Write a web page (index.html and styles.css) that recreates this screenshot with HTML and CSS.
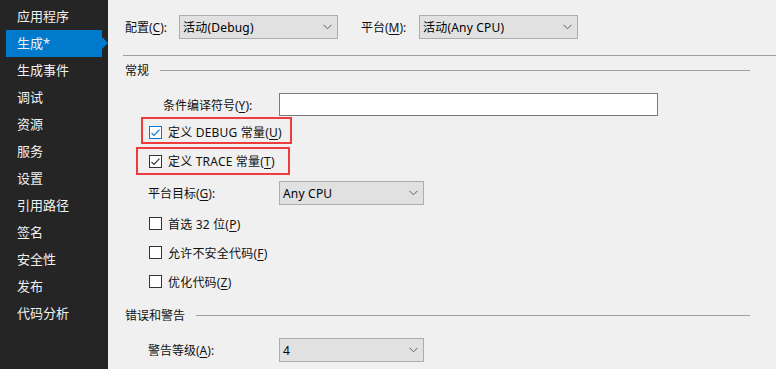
FILE: index.html
```html
<!DOCTYPE html>
<html lang="zh-CN">
<head>
<meta charset="utf-8">
<link rel="stylesheet" href="styles.css">
</head>
<body>
<div class="app">
  <nav class="side">
    <div class="item">应用程序</div>
    <div class="item active">生成*</div>
    <div class="item">生成事件</div>
    <div class="item">调试</div>
    <div class="item">资源</div>
    <div class="item">服务</div>
    <div class="item">设置</div>
    <div class="item">引用路径</div>
    <div class="item">签名</div>
    <div class="item">安全性</div>
    <div class="item">发布</div>
    <div class="item">代码分析</div>
  </nav>
  <main class="main">
    <div class="toprow">
      <span class="lbl-cfg">配置(<u>C</u>):</span>
      <div class="select sel-cfg"><span>活动(Debug)</span><svg class="chev" width="9" height="6" viewBox="0 0 9 6"><path d="M0.5 0.8 L4.5 4.8 L8.5 0.8" fill="none" stroke="#606060" stroke-width="1"/></svg></div>
      <span class="lbl-plat">平台(<u>M</u>):</span>
      <div class="select sel-plat"><span>活动(Any CPU)</span><svg class="chev" width="9" height="6" viewBox="0 0 9 6"><path d="M0.5 0.8 L4.5 4.8 L8.5 0.8" fill="none" stroke="#606060" stroke-width="1"/></svg></div>
    </div>
    <div class="rule"></div>
    <div class="section h1"><span>常规</span><div class="sline"></div></div>
    <div class="field f-sym">
      <span class="flabel flabel-deep">条件编译符号(<u>Y</u>):</span>
      <div class="input"></div>
    </div>
    <div class="cbrow r1">
      <div class="mark mark1">
        <span class="cb blue"><svg width="11" height="11" viewBox="0 0 11 11"><path d="M1.5 5.8 L4 8.3 L9.5 2.6" fill="none" stroke="#0078d7" stroke-width="1.2"/></svg></span>
        <span class="cbtext">定义 DEBUG 常量(<u>U</u>)</span>
      </div>
    </div>
    <div class="cbrow r2">
      <div class="mark mark2">
        <span class="cb"><svg width="11" height="11" viewBox="0 0 11 11"><path d="M1.5 5.8 L4 8.3 L9.5 2.6" fill="none" stroke="#333" stroke-width="1.2"/></svg></span>
        <span class="cbtext">定义 TRACE 常量(<u>T</u>)</span>
      </div>
    </div>
    <div class="field f-target">
      <span class="flabel">平台目标(<u>G</u>):</span>
      <div class="select sel-small"><span>Any CPU</span><svg class="chev" width="9" height="6" viewBox="0 0 9 6"><path d="M0.5 0.8 L4.5 4.8 L8.5 0.8" fill="none" stroke="#606060" stroke-width="1"/></svg></div>
    </div>
    <div class="cbrow plain c1"><span class="cb"></span><span class="cbtext">首选 32 位(<u>P</u>)</span></div>
    <div class="cbrow plain c2"><span class="cb"></span><span class="cbtext">允许不安全代码(<u>F</u>)</span></div>
    <div class="cbrow plain c3"><span class="cb"></span><span class="cbtext">优化代码(<u>Z</u>)</span></div>
    <div class="section h2"><span>错误和警告</span><div class="sline"></div></div>
    <div class="field f-warn">
      <span class="flabel">警告等级(<u>A</u>):</span>
      <div class="select sel-small"><span>4</span><svg class="chev" width="9" height="6" viewBox="0 0 9 6"><path d="M0.5 0.8 L4.5 4.8 L8.5 0.8" fill="none" stroke="#606060" stroke-width="1"/></svg></div>
    </div>
  </main>
</div>
</body>
</html>
```
FILE: styles.css
```css
* { box-sizing: border-box; }
html, body { margin: 0; padding: 0; }
body {
  width: 776px;
  height: 369px;
  overflow: hidden;
  background: #f0f0f0;
  font-family: "Noto Sans", "Noto Sans CJK SC", sans-serif;
  font-size: 12px;
  color: #111;
}
u { text-decoration: underline; text-underline-offset: 2px; }
.app { display: flex; height: 369px; }
.side {
  width: 108px;
  flex: none;
  background: #252526;
  padding-top: 3px;
}
.item {
  position: relative;
  height: 27px;
  line-height: 27px;
  padding-left: 17px;
  color: #f1f1f1;
  font-size: 13px;
  margin-right: 6px;
}
.item.active {
  background: #007acc;
  margin-left: 6px;
  padding-left: 11px;
}
.item.active::after {
  content: "";
  position: absolute;
  right: -6px;
  top: 7px;
  border-left: 6px solid #007acc;
  border-top: 6px solid transparent;
  border-bottom: 6px solid transparent;
}
.main { flex: 1; padding: 15px 0 0 15px; }
.toprow { display: flex; align-items: center; height: 24px; }
.lbl-cfg { margin-left: 2px; width: 54px; }
.lbl-plat { margin-left: 23px; width: 58px; }
.select {
  display: flex;
  align-items: center;
  justify-content: space-between;
  height: 24px;
  background: #e1e1e1;
  border: 1px solid #adadad;
  padding: 0 5px 0 3px;
  color: #000;
}
.select span { letter-spacing: 0.2px; }
.sel-cfg { width: 159px; }
.sel-plat { width: 159px; }
.sel-small { width: 145px; }
.chev { flex: none; }
.rule { height: 1px; background: #a0a0a0; margin-top: 16px; }
.section { display: flex; align-items: center; height: 16px; padding-left: 2px; }
.section .sline { flex: 1; height: 1px; background: #a0a0a0; margin-left: 11px; margin-right: 26px; }
.h1 { margin-top: 6px; }
.h2 { margin-top: 19px; }
.field { display: flex; align-items: center; }
.flabel { width: 156px; padding-left: 25px; flex: none; }
.flabel-deep { padding-left: 40px; }
.f-sym { margin-top: 15px; height: 23px; }
.input { width: 379px; height: 23px; background: #fff; border: 1px solid #7a7a7a; }
.cbrow { display: flex; align-items: center; }
.mark {
  display: flex;
  align-items: center;
  border: 2px solid #ee3b3b;
  height: 28px;
}
.mark1 { margin-left: 18px; padding-left: 6px; width: 151px; padding-top: 3px; height: 27px; }
.mark2 { margin-left: 13px; padding-left: 11px; width: 154px; }
.r1 { margin-top: 1px; }
.r2 { margin-top: 3px; }
.cb {
  flex: none;
  width: 13px;
  height: 13px;
  border: 1px solid #333;
  background: #fff;
  display: flex;
  align-items: center;
  justify-content: center;
}
.cb.blue { border-color: #0078d7; }
.cb svg { display: block; }
.cbtext { margin-left: 6px; white-space: nowrap; letter-spacing: 0.2px; }
.f-target { margin-top: 6px; height: 24px; }
.plain { padding-left: 26px; height: 13px; }
.c1 { margin-top: 12px; }
.c2 { margin-top: 16px; }
.c3 { margin-top: 16px; }
.f-warn { margin-top: 15px; height: 24px; }
```
